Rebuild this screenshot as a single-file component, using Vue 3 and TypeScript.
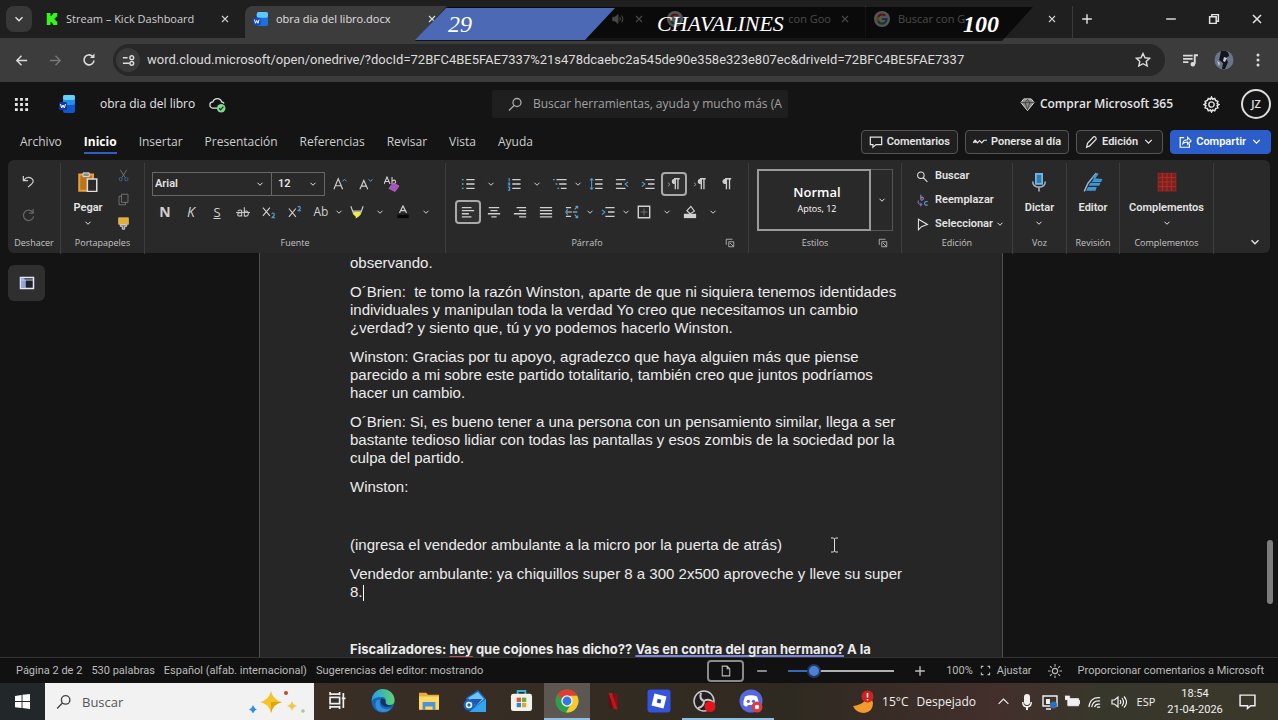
<script setup lang="ts">
import { h, ref } from 'vue'

type Shape = [d: string, stroke: string, fill?: string, width?: number]

const C = 'currentColor'
const B = '#4f9fd8'

const shapes: Record<string, Shape[]> = {
  chev: [['M4 6l4 4 4-4', C, '', 1.6]],
  up: [['M2 11l6-6 6 6', C, '', 1.4]],
  close: [['M4 4l8 8M12 4l-8 8', C, '', 1.5]],
  plus: [['M8 2.5v11M2.5 8h11', C, '', 1.6]],
  minus: [['M2.500 8h11', C, '', 1.6]],
  restore: [['M3 5.500h7.500v7.500h-7.500zM5.500 5.500v-2.500h7.500v7.500h-2.500', C, '', 1.7]],
  back: [['M14 8H3M8 3L3 8l5 5', C, '', 1.5]],
  forward: [['M2 8h11M8 3l5 5-5 5', C, '', 1.5]],
  reload: [['M13 8.500a5 5 0 1 1-1.500-4.200', C, '', 1.6], ['M13.500 1.500v4.500h-4.500z', '', C]],
  tune: [['M2 5h5M9 11h-7', C, '', 1.6], ['M9.500 5a2 2 0 1 0 4 0 2 2 0 1 0-4 0M9.500 11a2 2 0 1 0 4 0 2 2 0 1 0-4 0', C, '', 1.5]],
  star: [['M8 1.500l2 4.300 4.600.5-3.400 3.100 1 4.600L8 11.700 3.800 14l1-4.600L1.400 6.300 6 5.800z', C, '', 1.4]],
  queue: [['M1 3.500h9M1 6.500h9M1 9.500h5', C, '', 1.6], ['M12 11V3h3', C, '', 1.8], ['M8 11.500a2.200 2.200 0 1 0 4.400 0 2.200 2.200 0 1 0-4.400 0', '', C]],
  dots: [['M6.500 3a1.500 1.500 0 1 0 3 0 1.500 1.500 0 1 0-3 0M6.500 8a1.500 1.500 0 1 0 3 0 1.500 1.500 0 1 0-3 0M6.500 13a1.500 1.500 0 1 0 3 0 1.500 1.500 0 1 0-3 0', '', C]],
  volume: [['M2 6h2.500L8 3v10L4.500 10H2z', C, C, 1], ['M10 6q1.500 2 0 4M12 4q3 4 0 8', C, '', 1.2]],
  kick: [['M1 0h5v4h1.500v-2h2V0H15v5h-2v2h-1.500v2H13v2h2v5H9.500v-2h-2v-2H6v4H1z', '', '#37f51c']],
  grid: [['M1 1h3v3H1zM6.500 1h3v3h-3zM12 1h3v3h-3zM1 6.500h3v3H1zM6.500 6.500h3v3h-3zM12 6.500h3v3h-3zM1 12h3v3H1zM6.500 12h3v3h-3zM12 12h3v3h-3z', '', C]],
  cloud: [['M8 11.500H4a3 3 0 0 1-.3-6 4.300 4.300 0 0 1 8.200 0 3 3 0 0 1 2.300 1.500', C, '', 1.2], ['M7.500 11.500a4 4 0 1 0 8 0 4 4 0 1 0-8 0', '', '#7fd691'], ['M9.500 11.500l1.500 1.500 2.500-3', '#173b20', '', 1.2]],
  search: [['M6 6.500a4 4 0 1 0 8 0 4 4 0 1 0-8 0M7 9.500L2 14.500', C, '', 1.3]],
  find: [['M2 6.500a4 4 0 1 0 8 0 4 4 0 1 0-8 0M9 9.500l5 5', C, '', 1.3]],
  gem: [['M4 2h8l3 4-7 8.500L1 6z', C, '#8b8b8b', 1], ['M1 6h14M5.500 6L8 13.500 10.500 6 8 2.500z', '#333', '', .8]],
  gear: [['M8 1l1 2 2-.8.9 2.100 2.100.8-.7 2L15 8l-1.700 1.100.7 2-2.100.8-.9 2.100-2-.8-1 1.800-1-1.800-2 .8-.9-2.100-2.100-.8.7-2L1 8l1.700-1-.7-2 2.100-.8L5 2.200 7 3z', C, '', 1.4], ['M5.500 8a2.500 2.500 0 1 0 5 0 2.500 2.500 0 1 0-5 0', C, '', 1.3]],
  comment: [['M1.500 2.500h13v8.500H8l-3.500 3V11h-3z', C, '', 1.4]],
  wave: [['M0 9l2.500-3L5 9l2.500-2.500L10 9l2.500-3H16', C, '', 1.4], ['M1 7.500a1.500 1.500 0 1 0 3 0 1.500 1.500 0 1 0-3 0', '', C]],
  pencil: [['M3 14l1-4.500L11 2q1-.7 2.200.4T13.700 5L6.500 12.500z', C, '', 1.4]],
  share: [['M7 3H2.500v11h10.500v-4', C, '', 1.4], ['M5.500 10q.5-4.500 5.500-4.500V2.500l4 4.200-4 3.800V8Q7 8 5.500 10z', C, '', 1.2]],
  undo: [['M2.500 2v5h5M3 6.500Q7 2 11 4.500t0 6.500L7.500 14', C, '', 1.3]],
  redo: [['M13 2v4.500H8.500M12.800 6a5.500 5.500 0 1 0 .7 4', C, '', 1.3]],
  paste: [['M1 2h11v13H1z', '#e9a13b', '#b9741d', 1.6], ['M4 .7h5v3H4z', '#ddd', '#888', .8], ['M7.500 5.500H15v10H7.500z', '#ddd', '#2a2a2a', 1.200]],
  cut: [['M4 1l6 9.500M12 1L6 10.500', '#777', '', 1.1], ['M2.500 12.500a2 2 0 1 0 4 0 2 2 0 1 0-4 0M9.500 12.500a2 2 0 1 0 4 0 2 2 0 1 0-4 0', '#35658a', '', 1.2]],
  copy: [['M5.500 1.500h8v10h-8zM5.500 4H2.500v10.500h8v-3', '#777', '', 1.1]],
  painter: [['M2 1h12v8H2z', '#e5bd57', '#e0ae3d', 1], ['M4 9.500h8v2H9.500V15h-3v-3.500H4z', '#eee', '#777', 1]],
  grow: [['M1 14L6 2l5 12M3 10h6', C, '', 1.3], ['M11 5l2.200-2.500L15.500 5', B, '', 1.1]],
  shrink: [['M1 14L5.500 4 10 14M3 10.500h5', C, '', 1.3], ['M11 2.500L13.200 5l2.300-2.500', B, '', 1.1]],
  clear: [['M0 8l3-7 3 7M1 5.500h4M8 1v7M8 5q3-2 3.500.5T8 7.500', C, '', 1.1], ['M9 7l6 3-4 5.500-6-3z', '#b15cc6', '#a653ba', 1]],
  sub: [['M1 3l8 9.500M9 3L1 12.500', C, '', 1.3], ['M11 10q2.500-2 3 .3T11 14.500h4', B, '', 1.2]],
  sup: [['M1 4l8 9.500M9 4L1 13.500', C, '', 1.3], ['M11 2.500q2.500-2 3 .3T11 6.500h4', B, '', 1.2]],
  strike: [['M0 8.500h16', C, '', 1.1], ['M6.500 6v7M2 7q4-2.500 4.500 0M6.500 9Q2 8.500 2 11t4.500 1M9.500 2.500V13M9.500 7.500q4-2 4.500 2t-4.500 3', C, '', 1.2]],
  marker: [['M1 1.500l2 5.500h10l2-5.500M3 7l1 3h8l1-3', C, '', 1.300], ['M4 8h8v3l-2 2-3.500 2.500V13L4 11z', '', '#e9ee48']],
  fontcol: [['M4 9L8 1l4 8M5.500 6.500h5', C, '', 1.3], ['M1.500 11h13v4h-13z', '', '#080808']],
  bullets: [['M6 3h9.500M6 8h9.500M6 13h9.500', C, '', 1.5], ['M1 3h2M1 8h2M1 13h2', B, '', 1.6]],
  numbers: [['M6 3h9.500M6 8h9.500M6 13h9.500', C, '', 1.5], ['M2.500 1v4M1 7h2v2H1M1 11.500h2V15H1', B, '', 1.3]],
  multi: [['M4 3h11.500M7 8h8.500M9 13h6.500', C, '', 1.5], ['M0 3h2M3 8h2M5 13h2', B, '', 1.5]],
  spacing: [['M7 3h8.500M7 8h8.500M7 13h8.500', C, '', 1.5], ['M3 2v12M1 4l2-2 2 2M1 12l2 2 2-2', B, '', 1.2]],
  outdent: [['M1 3h11M1 8h7M1 13h11', C, '', 1.5], ['M15 5.500L11.500 8l3.500 3', B, '', 1.2]],
  indent: [['M5 3h10.500M8 8h7.500M5 13h10.500', C, '', 1.5], ['M1 5.500L4.500 8 1 11', B, '', 1.2]],
  ltr: [['M9.500 2v12M12.500 2v12M8 2h6.500', C, '', 1.500], ['M9 2Q5.500 2 5.500 5t3.500 3z', '', C], ['M1 6.500l2.500 2L1 10.500', '#999', '', 1]],
  pilcrow: [['M8.500 2v12M12 2v12M7 2h7', C, '', 1.500], ['M8 2Q4 2 4 5t4 3z', '', C]],
  left: [['M1 3h11M1 6.500h14M1 10h8M1 13.500h11', C, '', 1.5]],
  center: [['M2 3h12M4 6.500h8M1 10h14M5 13.500h6', C, '', 1.5]],
  right: [['M4 3h11M7 6.500h8M1 10h14M7 13.500h8', C, '', 1.5]],
  justify: [['M1 3h14M1 6.500h14M1 10h14M1 13.500h14', C, '', 1.5]],
  linesp: [['M8 8H2M1 3h6M1 13h6M9 8h5', C, '', 1.3], ['M11 5l3-3M11 11l3 3M3 5l-2 3 2 3M12 1.500h2.500v2.500M12 14.500h2.500V12', B, '', 1.4]],
  border: [['M1.500 1.500h13v13h-13z', C, '', 1.6], ['M8 4v8M4 8h8', '#777', '', 1]],
  fill: [['M4.500 6.500L9 1.500 13 7l-5 3z', C, '', 1.3], ['M1 10h14v5H1z', '', C]],
  launch: [['M2 11V2h10', C, '', 1.3], ['M6 6h8v8H6z', C, '', 1.3], ['M8 8l5 5', C, '', 1.300]],
  replace: [['M6 1v6M6 5q3-2 3 .5T6 7.500', '#a48ad6', '', 1.3], ['M3 8q-2 5 4 5M5 10.500l2.500 2.500L5 15', '#8b7fd0', '', 1.2], ['M14.500 9.500q-4-1-4 2t4 2', B, '', 1.400]],
  cursor: [['M3 1.500v13l3.800-3.800 7.200-2.700z', C, '', 1.3]],
  mic: [['M5.500 1.500h5v8h-5z', '#71b7e6', '#2c7db8', 1.4], ['M3 7.500q0 4.500 5 4.500t5-4.500M8 12v3.500', '#aab', '', 1.3]],
  editor: [['M1 15.500L4 9l6.500-8', '#9fb2c4', '', 1.2], ['M7 5l4-4.500 1.500 1L10 5zM9 5l6.500.5-1 2.500H7zM6 8.500h8l-1 2.500H4.500zM4 12h7l-1 3H2.500z', '', '#3f95d6']],
  addins: [['M1 1h14v14H1z', '#8a2723', '#7d1f1c', 1], ['M8 1v14M1 8h14M4.500 1v14M11.500 1v14M1 4.500h14M1 11.500h14', '#a93029', '', .8]],
  pane: [['M1.500 2.500h13v11h-13z', '#e6e9f5', '#20232c', 1.5], ['M2 3h3.500v10H2z', '', '#8fa6ea'], ['M2 5h12M6 5v8', '#c5cdec', '', 1.2]],
  page: [['M3 1.500h6.500L13 5v9.500H3zM9.500 1.500V5H13', C, '', 1.4]],
  fit: [['M5 2H2v3M11 2h3v3M5 14H2v-3M11 14h3v-3', C, '', 1.6]],
  sun: [['M8 0v3M8 13v3M0 8h3M13 8h3M2.300 2.300l2 2M11.700 11.700l2 2M13.700 2.300l-2 2M4.300 11.700l-2 2', C, '', 1.2], ['M5 8a3 3 0 1 0 6 0 3 3 0 1 0-6 0', C, '', 1.3]],
  windows: [['M0 2l7-1v6.500H0zM8 .9L16 0v7.500H8zM0 8.500h7V15l-7-1zM8 8.500h8V16l-8-1z', '', C]],
  task: [['M1 2h9M1 14h9M1 5h9v6H1zM1 0v3M10 0v3M1 13v3M10 13v3', C, '', 1.6], ['M13.500 1v14M12 6h3.500', C, '', 1.6]],
  traymic: [['M8 0q3 0 3 3v5q0 3-3 3T5 8V3q0-3 3-3zM3 8h1.500q0 4 3.500 4t3.500-4H13q0 5-4 5.500V16H7v-2.500Q3 13 3 8z', '', C]],
  screen: [['M1 2h14v10H1zM4 15h5', C, '', 1.400], ['M4 5h4v5H4z', '', C], ['M8 11a3.500 3.500 0 1 0 7 0 3.500 3.500 0 1 0-7 0', '', '#2f6fb8']],
  battery: [['M3 5h11.500v7.500H3z', C, C, 1], ['M0 2h5v4H0zM15 7h1v3.500h-1z', C, C, .6]],
  wifi: [['M13 14H9.500M13 11Q8 10 7 14M13 7.500Q5 6.500 4 14M13 4Q2 3 1 14', C, '', 1.2]],
  sound: [['M1 6h2.500L7 3v10L3.500 10H1z', C, '', 1.2], ['M9 6q1.500 2 0 4M11 4q3 4 0 8M13 2.500q5 5.500 0 11', C, '', 1.2]],
  note: [['M1 2h14v10h-4l-3 2.500V12H1z', C, '', 1.4]],
}

const Ico = (p: { n: string; s?: number }) =>
  h('svg', { class: 'ico', viewBox: '0 0 16 16', width: p.s ?? 14, height: p.s ?? 14, 'aria-hidden': 'true' },
    shapes[p.n].map(([d, stroke, fill, w]) =>
      h('path', { d, stroke: stroke || 'none', fill: fill || 'none', 'stroke-width': w ?? 1 })))
Ico.props = ['n', 's']

const menus = ['Archivo', 'Inicio', 'Insertar', 'Presentación', 'Referencias', 'Revisar', 'Vista', 'Ayuda']
const activeMenu = ref('Inicio')
const searchTabs = ['con Goo', 'Buscar con G']

interface Tool { n: string; label: string; kind?: 'chev' | 'tight' | 'on'; text?: string; cls?: string }
const more = (kind: 'chev' | 'tight' = 'chev'): Tool => ({ n: 'chev', label: 'Más opciones', kind })

const fontTools: Tool[] = [
  { n: '', label: 'Negrita', text: 'N', cls: 'bold' },
  { n: '', label: 'Cursiva', text: 'K', cls: 'italic' },
  { n: '', label: 'Subrayado', text: 'S', cls: 'under' },
  { n: 'strike', label: 'Tachado' },
  { n: 'sub', label: 'Subíndice' },
  { n: 'sup', label: 'Superíndice' },
  { n: '', label: 'Mayúsculas', text: 'Ab' },
  more('tight'),
  { n: 'marker', label: 'Resaltado' }, more(),
  { n: 'fontcol', label: 'Color de fuente' }, more(),
]
const paraTop: Tool[] = [
  { n: 'bullets', label: 'Viñetas' }, more(),
  { n: 'numbers', label: 'Numeración' }, more(),
  { n: 'multi', label: 'Lista multinivel' }, more('tight'),
  { n: 'spacing', label: 'Espaciado' },
  { n: 'outdent', label: 'Disminuir sangría' },
  { n: 'indent', label: 'Aumentar sangría' },
  { n: 'ltr', label: 'De izquierda a derecha', kind: 'on' },
  { n: 'ltr', label: 'De derecha a izquierda' },
  { n: 'pilcrow', label: 'Marcas de párrafo' },
]
const paraBottom: Tool[] = [
  { n: 'left', label: 'Alinear a la izquierda', kind: 'on' },
  { n: 'center', label: 'Centrar' },
  { n: 'right', label: 'Alinear a la derecha' },
  { n: 'justify', label: 'Justificar' },
  { n: 'linesp', label: 'Interlineado' }, more('tight'),
  { n: 'indent', label: 'Sangría especial' }, more('tight'),
  { n: 'border', label: 'Bordes' }, more(),
  { n: 'fill', label: 'Sombreado' }, more(),
]

const paragraphs: string[][] = [
  ['observando.'],
  ['O´Brien:  te tomo la razón Winston, aparte de que ni siquiera tenemos identidades', 'individuales y manipulan toda la verdad Yo creo que necesitamos un cambio', '¿verdad? y siento que, tú y yo podemos hacerlo Winston.'],
  ['Winston: Gracias por tu apoyo, agradezco que haya alguien más que piense', 'parecido a mi sobre este partido totalitario, también creo que juntos podríamos', 'hacer un cambio.'],
  ['O´Brien: Si, es bueno tener a una persona con un pensamiento similar, llega a ser', 'bastante tedioso lidiar con todas las pantallas y esos zombis de la sociedad por la', 'culpa del partido.'],
  ['Winston:'],
  [''],
  ['(ingresa el vendedor ambulante a la micro por la puerta de atrás)'],
]
const zoomLevel = ref(20)
const search = ref('')
const winSearch = ref('')
</script>

<template>
  <div class="screen">
    <header class="tabstrip">
      <button class="tab-list" aria-label="Buscar pestañas"><Ico n="chev" :s="14" /></button>
      <div class="tab">
        <Ico n="kick" :s="12" /><span class="tab-name">Stream – Kick Dashboard</span>
        <button class="plain" aria-label="Cerrar"><Ico n="close" :s="12" /></button>
      </div>
      <div class="tab active">
        <svg class="ico" viewBox="0 0 16 16" width="15" height="15"><rect x="4" width="12" height="15" rx="2" fill="#1c6fdd" /><rect x="4" width="12" height="6" rx="2" fill="#5cc8fa" /><rect y="6" width="8" height="8" rx="1.500" fill="#1746b5" /><path d="M1.500 8l1.200 4L4 9l1.300 3 1.200-4" stroke="#fff" fill="none" /></svg>
        <span class="tab-name">obra dia del libro.docx</span>
        <button class="plain" aria-label="Cerrar"><Ico n="close" :s="12" /></button>
      </div>
      <div class="tab">
        <span class="tab-name"></span>
        <Ico n="volume" :s="14" />
        <button class="plain" aria-label="Cerrar"><Ico n="close" :s="12" /></button>
      </div>
      <div v-for="(name, i) in searchTabs" :key="name" class="tab google">
        <svg class="ico" viewBox="0 0 16 16" width="16" height="16"><circle cx="8" cy="8" r="8" fill="#f2f2f2" /><g fill="none" stroke-width="2.200"><path d="M11.200 4.800A4.500 4.500 0 0 0 4 6" stroke="#ea4335" /><path d="M4 6a4.500 4.500 0 0 0 0 4" stroke="#fbbc05" /><path d="M4 10a4.500 4.500 0 0 0 7 1.500" stroke="#34a853" /><path d="M11 11.500A4.500 4.500 0 0 0 12.500 8H8" stroke="#4285f4" /></g></svg>
        <span class="tab-name" :class="{ late: i === 0 }">{{ name }}</span>
        <button class="plain" aria-label="Cerrar"><Ico n="close" :s="12" /></button>
      </div>
      <button class="plain new-tab" aria-label="Nueva pestaña"><Ico n="plus" :s="14" /></button>
      <div class="window-controls">
        <button class="plain" aria-label="Minimizar"><Ico n="minus" :s="14" /></button>
        <button class="plain" aria-label="Restaurar"><Ico n="restore" :s="14" /></button>
        <button class="plain" aria-label="Cerrar ventana"><Ico n="close" :s="16" /></button>
      </div>
      <div class="banner">
        <div class="banner-dark"></div><div class="banner-blue"></div>
        <span class="score one">29</span><span class="score name">CHAVALINES</span><span class="score two">100</span>
      </div>
    </header>

    <nav class="toolbar" aria-label="Navegación">
      <button class="plain nav" aria-label="Atrás"><Ico n="back" :s="15" /></button>
      <button class="plain nav dim" aria-label="Adelante"><Ico n="forward" :s="15" /></button>
      <button class="plain nav" aria-label="Recargar"><Ico n="reload" :s="16" /></button>
      <div class="omnibox">
        <button class="site" aria-label="Información del sitio"><Ico n="tune" :s="15" /></button>
        <input class="url" aria-label="Dirección" value="word.cloud.microsoft/open/onedrive/?docId=72BFC4BE5FAE7337%21s478dcaebc2a545de90e358e323e807ec&amp;driveId=72BFC4BE5FAE7337" />
        <button class="plain" aria-label="Favorito"><Ico n="star" :s="16" /></button>
      </div>
      <button class="plain nav" aria-label="Multimedia"><Ico n="queue" :s="17" /></button>
      <button class="plain nav" aria-label="Perfil">
        <svg class="ico" viewBox="0 0 20 20" width="20" height="20"><circle cx="10" cy="10" r="9.500" fill="#69758a" /><path d="M7 1q8-1 8 5l-3 2 2 4-3 7H8l1-6-4-3 1-4z" fill="#14161b" /><path d="M10 7l3 1-2 4-2-1zM3 11l3 2-1 3z" fill="#c4cad4" /></svg>
      </button>
      <button class="plain kebab" aria-label="Menú"><Ico n="dots" :s="16" /></button>
    </nav>

    <section class="word-head">
      <button class="plain waffle" aria-label="Aplicaciones"><Ico n="grid" :s="15" /></button>
      <svg class="ico logo" viewBox="0 0 16 18" width="16" height="18"><rect x="4" width="12" height="18" rx="2" fill="#0f56cf" /><rect x="4" width="12" height="10" rx="2" fill="#2490ee" /><rect x="4" width="12" height="5" rx="2" fill="#65d0fb" /><rect y="7" width="8" height="8" rx="1.500" fill="#12379c" /><path d="M1.500 9l1.200 4L4 10l1.300 3 1.200-4" stroke="#fff" fill="none" /></svg>
      <span class="doc-name">obra dia del libro</span>
      <Ico n="cloud" :s="17" />
      <label class="word-search"><Ico n="search" :s="16" /><input v-model="search" aria-label="Buscar" placeholder="Buscar herramientas, ayuda y mucho más (Alt + Q)" /></label>
      <button class="plain buy"><Ico n="gem" :s="15" />Comprar Microsoft 365</button>
      <button class="plain gear" aria-label="Configuración"><Ico n="gear" :s="17" /></button>
      <button class="avatar">JZ</button>
    </section>

    <section class="menu-row">
      <button v-for="m in menus" :key="m" class="menu" :class="{ sel: m === activeMenu }" @click="activeMenu = m">{{ m }}</button>
      <div class="actions">
        <button class="action"><Ico n="comment" :s="14" />Comentarios</button>
        <button class="action"><Ico n="wave" :s="14" />Ponerse al día</button>
        <button class="action"><Ico n="pencil" :s="14" />Edición<Ico n="chev" :s="13" /></button>
        <button class="action primary"><Ico n="share" :s="14" />Compartir<Ico n="chev" :s="13" /></button>
      </div>
    </section>

    <section class="ribbon">
      <div class="group">
        <div class="body undo-col">
          <button class="tool" aria-label="Deshacer"><Ico n="undo" :s="15" /></button>
          <button class="tool dim" aria-label="Rehacer"><Ico n="redo" :s="15" /></button>
        </div>
        <div class="caption"><span>Deshacer</span></div>
      </div>
      <div class="group">
        <div class="body clip">
          <button class="big"><Ico n="paste" :s="20" /><span>Pegar</span><Ico n="chev" :s="10" /></button>
          <div class="stack">
            <button class="tool" aria-label="Cortar"><Ico n="cut" :s="13" /></button>
            <button class="tool" aria-label="Copiar"><Ico n="copy" :s="13" /></button>
            <button class="tool" aria-label="Copiar formato"><Ico n="painter" :s="13" /></button>
          </div>
        </div>
        <div class="caption"><span>Portapapeles</span></div>
      </div>
      <div class="group">
        <div class="body rows">
          <div class="row">
            <span class="combo"><select aria-label="Fuente"><option>Arial</option></select><Ico n="chev" :s="10" /></span>
            <span class="combo size"><select aria-label="Tamaño"><option>12</option></select><Ico n="chev" :s="10" /></span>
            <button class="tool" aria-label="Aumentar"><Ico n="grow" /></button>
            <button class="tool" aria-label="Reducir"><Ico n="shrink" /></button>
            <button class="tool" aria-label="Borrar formato"><Ico n="clear" :s="16" /></button>
          </div>
          <div class="row">
            <button v-for="(t, i) in fontTools" :key="i" class="tool" :class="[t.kind, t.cls]" :aria-label="t.label">
              <template v-if="t.text">{{ t.text }}</template><Ico v-else :n="t.n" :s="t.n === 'chev' ? 10 : 14" />
            </button>
          </div>
        </div>
        <div class="caption"><span>Fuente</span></div>
      </div>
      <div class="group">
        <div class="body rows para">
          <div v-for="(r, k) in [paraTop, paraBottom]" :key="k" class="row">
            <button v-for="(t, i) in r" :key="i" class="tool" :class="t.kind" :aria-label="t.label"><Ico :n="t.n" :s="t.n === 'chev' ? 10 : 14" /></button>
          </div>
        </div>
        <div class="caption has-launch"><span>Párrafo</span><button class="plain launch" aria-label="Opciones de párrafo"><Ico n="launch" :s="10" /></button></div>
      </div>
      <div class="group">
        <div class="body styles">
          <button class="style-card"><strong>Normal</strong><small>Aptos, 12</small></button>
          <button class="style-more" aria-label="Más estilos"><Ico n="chev" :s="10" /></button>
        </div>
        <div class="caption has-launch"><span>Estilos</span><button class="plain launch" aria-label="Opciones de estilos"><Ico n="launch" :s="10" /></button></div>
      </div>
      <div class="group">
        <div class="body edit">
          <button class="line"><Ico n="find" :s="13" />Buscar</button>
          <button class="line"><Ico n="replace" :s="13" />Reemplazar</button>
          <button class="line"><Ico n="cursor" :s="13" /><span>Seleccionar</span><Ico n="chev" :s="10" /></button>
        </div>
        <div class="caption"><span>Edición</span></div>
      </div>
      <div class="group">
        <div class="body one"><button class="big"><Ico n="mic" :s="20" /><span>Dictar</span><Ico n="chev" :s="10" /></button></div>
        <div class="caption"><span>Voz</span></div>
      </div>
      <div class="group">
        <div class="body one"><button class="big"><Ico n="editor" :s="20" /><span>Editor</span></button></div>
        <div class="caption"><span>Revisión</span></div>
      </div>
      <div class="group">
        <div class="body one"><button class="big"><Ico n="addins" :s="20" /><span>Complementos</span><Ico n="chev" :s="10" /></button></div>
        <div class="caption"><span>Complementos</span></div>
      </div>
      <div class="group last"><button class="plain" aria-label="Contraer la cinta"><Ico n="chev" :s="14" /></button></div>
    </section>

    <main class="canvas">
      <aside class="rail"><button class="pane" aria-label="Panel de navegación"><Ico n="pane" :s="16" /></button></aside>
      <article class="paper">
        <p v-for="(p, i) in paragraphs" :key="i"><span v-for="l in p" :key="l" class="ln">{{ l }}</span></p>
        <p><span class="ln">Vendedor ambulante: ya chiquillos super 8 a 300 2x500 aproveche y lleve su super</span><span class="ln">8.<i class="caret"></i></span></p>
        <p></p>
        <p class="fisc">Fiscalizadores: <span class="typo">hey</span> que cojones has dicho?? <span class="gram">Vas en contra del gran hermano?</span> A la</p>
        <svg class="ibeam" viewBox="0 0 9 16" width="9" height="16"><path d="M1 1h2.500l1 1 1-1H8M4.500 2v12M1 15h2.500l1-1 1 1H8" stroke="#ddd" fill="none" /></svg>
      </article>
      <div class="track"><div class="thumb"></div></div>
    </main>

    <footer class="status">
      <span>Página 2 de 2</span><span>530 palabras</span><span>Español (alfab. internacional)</span><span>Sugerencias del editor: mostrando</span>
      <div class="status-right">
        <button class="view" aria-label="Diseño de impresión"><Ico n="page" :s="12" /></button>
        <button class="plain step" aria-label="Alejar"><Ico n="minus" :s="14" /></button>
        <input v-model="zoomLevel" class="zoom" type="range" min="0" max="100" aria-label="Zoom" />
        <button class="plain step" aria-label="Acercar"><Ico n="plus" :s="14" /></button>
        <span class="pct">100%</span>
        <button class="plain fit"><Ico n="fit" :s="11" />Ajustar</button>
        <button class="plain sun" aria-label="Tema"><Ico n="sun" :s="14" /></button>
        <a href="#" class="feedback">Proporcionar comentarios a Microsoft</a>
      </div>
    </footer>

    <footer class="taskbar">
      <button class="start" aria-label="Inicio"><Ico n="windows" :s="15" /></button>
      <label class="win-search">
        <Ico n="search" :s="17" /><input v-model="winSearch" aria-label="Buscar" placeholder="Buscar" />
        <svg class="ico" viewBox="0 0 60 26" width="60" height="26"><path d="M23 2q2 9 11 11-9 2-11 11-2-9-11-11 9-2 11-11z" fill="#f5c526" /><path d="M23 13l11 0q-9 2-11 11z" fill="#e0a413" /><path d="M44 12q1 4 5 5-4 1-5 5-1-4-5-5 4-1 5-5z" fill="#efc94c" /><path d="M5 16q1 3.500 4 4.500-3 1-4 4-1-3-4-4 3-1 4-4.500z" fill="#2f8fe0" /><circle cx="38" cy="4" r="2" fill="#c9442e" /><circle cx="55" cy="22" r="1.800" fill="#a8c795" /></svg>
      </label>
      <button class="app" aria-label="Vista de tareas"><Ico n="task" :s="17" /></button>
      <button class="app" aria-label="Edge">
        <svg viewBox="0 0 24 24" width="24" height="24"><defs><linearGradient id="eg" x1="0" x2="1"><stop offset="0" stop-color="#2a9be8" /><stop offset="1" stop-color="#5bd66b" /></linearGradient></defs><circle cx="12" cy="12" r="11.500" fill="#1567b8" /><path d="M.7 12A11.400 11.400 0 0 1 23.500 11q.3 5-5 5-5 0-4-3 1-5-4-5Q3 8 .7 12z" fill="url(#eg)" /><path d="M9 11q-2 7 5 9 4 .7 7-1.500-4 5-9.500 4.500-7-1-7-7T9 11z" fill="#2f8fdd" /><path d="M10.500 9.500q-2 3 0 6 3 3.500 8.500 2l3-1.500q-7 1-7.500-3 1-3-4-3.500z" fill="#13355e" /></svg>
      </button>
      <button class="app" aria-label="Explorador">
        <svg viewBox="0 0 24 22" width="22" height="20"><path d="M1 2h8l2 2h12v17H1z" fill="#e7ad34" /><path d="M1 6h22v14H1z" fill="#fbd96a" /><path d="M5 12h14v9h-3v-4H8v4H5z" fill="#4f94cf" /></svg>
      </button>
      <button class="app" aria-label="Correo">
        <svg viewBox="0 0 24 24" width="24" height="24"><path d="M3 9L15 1l8 9v13H8z" fill="#1d69c4" /><path d="M5 9L15 3l6 7-8 7z" fill="#6cc6f3" /><path d="M6 23l17-13v13z" fill="#2fa6ee" /><path d="M7 10h12l-6 7z" fill="#2457a8" /><circle cx="6" cy="16" r="5.500" fill="#1a63bd" /><circle cx="6" cy="16" r="2.500" fill="none" stroke="#e8f4ff" stroke-width="1.600" /></svg>
      </button>
      <button class="app" aria-label="Tienda">
        <svg viewBox="0 0 24 24" width="23" height="23"><path d="M8 6V2h8v4" stroke="#36b7d6" stroke-width="2" fill="none" /><rect x="1" y="5" width="22" height="18" rx="2.500" fill="#f2f1ec" /><path d="M7 9h4.500v4.500H7z" fill="#d65a36" /><path d="M12.500 9H17v4.500h-4.500z" fill="#6ea83a" /><path d="M7 14.500h4.500V19H7z" fill="#3183c8" /><path d="M12.500 14.500H17V19h-4.500z" fill="#dda62c" /></svg>
      </button>
      <button class="app current open" aria-label="Chrome">
        <svg viewBox="0 0 24 24" width="24" height="24"><circle cx="12" cy="12" r="11.500" fill="#2f9e4b" /><path d="M12 12L2 6.200A11.500 11.500 0 0 1 22 6.200L22.500 7.500z" fill="#df3f31" /><path d="M12 .5A11.500 11.500 0 0 1 22 6.500H12z" fill="#df3f31" /><path d="M22.200 6.800A11.500 11.500 0 0 1 11 23.500L16.500 14 15 6.800z" fill="#f7c92f" /><circle cx="12" cy="12" r="5.700" fill="#f5f5f5" /><circle cx="12" cy="12" r="4.400" fill="#3577e0" /></svg>
      </button>
      <button class="app" aria-label="Netflix">
        <svg viewBox="0 0 12 20" width="12" height="18"><path d="M1 1h3.500v18L1 17z" fill="#5e1013" /><path d="M7.500 1L11 3v16.500l-3.500-.5z" fill="#8e0d14" /><path d="M1 1h4L11 19.500 7 19z" fill="#c4141f" /></svg>
      </button>
      <button class="app" aria-label="Roblox">
        <svg viewBox="0 0 24 24" width="24" height="24"><rect x=".5" y=".5" width="23" height="23" rx="3" fill="#3553dc" /><path d="M7.500 4.500l12 3-3 12-12-3z" fill="#fff" /><path d="M10.700 9.700l3.700 1-1 3.700-3.700-1z" fill="#2446c4" /></svg>
      </button>
      <button class="app open" aria-label="OBS">
        <svg viewBox="0 0 24 24" width="24" height="24"><circle cx="11" cy="12" r="10" fill="#211f22" stroke="#c9c9c9" stroke-width="1.500" /><path d="M11 12Q6 10 8 4M11 12q5-3 9 1M11 12q0 6-6 7" stroke="#c9c9c9" stroke-width="2" fill="none" /><circle cx="17" cy="17.500" r="5.500" fill="#e0161c" /></svg>
      </button>
      <button class="app open" aria-label="Discord">
        <svg viewBox="0 0 24 24" width="24" height="24"><circle cx="12" cy="12" r="11.500" fill="#5967df" /><path d="M6 7.500q6-2.500 12 0 2 4 1.500 8.500-2 1.500-3.500 1.500l-1-1.500H9l-1 1.500q-2 0-3.500-1.500Q4 11.500 6 7.500z" fill="#fff" /><circle cx="9.300" cy="12.300" r="1.600" fill="#5967df" /><circle cx="14.500" cy="12.300" r="1.600" fill="#5967df" /><circle cx="18" cy="18" r="5.500" fill="#dc3a46" /><circle cx="18" cy="18" r="2.200" fill="#fff" /></svg>
      </button>
      <div class="tray">
        <button class="plain weather">
          <svg viewBox="0 0 22 24" width="22" height="24"><path d="M14 5q1 9-13 11 3 7 11 7 9-1 9-10-1-6-7-8z" fill="#f39a2d" /><circle cx="15.500" cy="6.500" r="6" fill="#cf2320" /><path d="M15.500 3v4.500M15.500 9v1.500" stroke="#fff" stroke-width="1.500" /></svg>
          <span>15°C</span><span>Despejado</span>
        </button>
        <button class="plain tr" aria-label="Mostrar iconos ocultos"><Ico n="up" :s="13" /></button>
        <button class="plain tr" aria-label="Micrófono"><Ico n="traymic" :s="16" /></button>
        <button class="plain tr" aria-label="Pantalla"><Ico n="screen" :s="16" /></button>
        <button class="plain tr" aria-label="Batería"><Ico n="battery" :s="15" /></button>
        <button class="plain tr" aria-label="Red"><Ico n="wifi" :s="15" /></button>
        <button class="plain tr" aria-label="Volumen"><Ico n="sound" :s="16" /></button>
        <button class="plain lang">ESP</button>
        <button class="plain clock"><span>18:54</span><span>21-04-2026</span></button>
        <button class="plain notes" aria-label="Notificaciones"><Ico n="note" :s="17" /></button>
      </div>
    </footer>
  </div>
</template>

<style>
body { margin: 0; background: #141414; }
</style>

<style scoped>
* { box-sizing: border-box; }
.screen { height: 100vh; display: flex; flex-direction: column; overflow: hidden; background: #141414; color: #e4e4e4; font: 12px/16px "Open Sans", "Noto Sans", sans-serif; }
button, input, select { font: inherit; color: inherit; margin: 0; padding: 0; border: 0; background: none; outline: 0; }
button { display: flex; align-items: center; justify-content: center; white-space: nowrap; }
.ico { display: block; flex: none; }

.tabstrip { position: relative; flex: none; height: 38px; display: flex; align-items: center; padding-left: 6px; background: #1f1f1f; }
.tab-list { width: 26px; height: 26px; margin-right: 6px; border-radius: 8px; background: #383838; }
.tab { flex: 0 1 207px; min-width: 0; height: 32px; align-self: flex-end; display: flex; align-items: center; gap: 8px; padding: 0 14px 6px 8px; font-size: 11px; color: #cfcfcf; }
.tab.active { background: #3c3c3c; border-radius: 8px 8px 0 0; color: #e0e0e0; }
.tab-name { flex: 1; min-width: 0; overflow: hidden; white-space: nowrap; }
.tab-name.late { text-align: right; }
.google { border-right: 1px solid #3a3a3a; }
.new-tab { width: 28px; }
.window-controls { margin-left: auto; display: flex; }
.window-controls button { width: 43px; }
.banner { position: absolute; top: 7px; left: 415px; width: 618px; height: 34px; color: #fff; font: italic 24px/34px "Liberation Serif", serif; }
.banner-dark { position: absolute; inset: 0; background: rgba(0, 0, 0, .65); clip-path: polygon(31px 0, 100% 0, 587px 100%, 0 100%); }
.banner-blue { position: absolute; left: 0; top: 1px; width: 200px; height: 32px; background: #4b69b4; clip-path: polygon(31px 0, 100% 0, 170px 100%, 0 100%); }
.score { position: absolute; top: 0; }
.one.score { left: 33px; }
.name { left: 242px; font-size: 22px; }
.two { left: 548px; font-weight: bold; }

.toolbar { flex: none; height: 44px; display: flex; align-items: center; padding: 0 3px 0 4px; background: #3c3c3c; color: #dcdcdc; }
.nav { width: 34px; height: 32px; }
.dim { color: #777; }
.omnibox { flex: 1; display: flex; align-items: center; height: 32px; margin: 0 8px 0 7px; padding: 0 14px 0 3px; border-radius: 16px; background: #282828; }
.site { width: 24px; height: 24px; border-radius: 12px; background: #3a3a3a; }
.url { flex: 1; min-width: 0; margin-left: 7px; font-family: Roboto, sans-serif; font-size: 13px; }
.kebab { width: 34px; }

.word-head { flex: none; height: 44px; display: flex; align-items: center; padding: 0 7px 0 14px; background: #141414; }
.logo { margin: 0 25px 0 30px; }
.doc-name { width: 109px; font-size: 12px; white-space: nowrap; }
.word-search { display: flex; align-items: center; gap: 10px; width: 296px; height: 28px; margin-left: auto; padding: 0 6px 0 15px; background: #1f1f1f; border-radius: 3px; color: #aaa; }
.word-search input { flex: 1; min-width: 0; }
.word-search input::placeholder { color: #a2a2a2; }
.buy { gap: 5px; margin-left: 232px; font-weight: 600; }
.gear { margin-left: 30px; }
.avatar { width: 30px; height: 30px; margin-left: 21px; border: 2px solid #ddd; border-radius: 15px; font-size: 11px; font-weight: 600; }

.menu-row { flex: none; height: 34px; display: flex; align-items: center; padding: 0 7px 3px 20px; background: #141414; }
.menu { height: 24px; margin-right: 22px; border-bottom: 2px solid transparent; border-top: 2px solid transparent; color: #cfcfcf; }
.menu.sel { color: #fff; font-weight: 700; border-bottom-color: #2f5fc4; }
.actions { display: flex; gap: 7px; margin-left: auto; }
.action { height: 24px; padding: 0 7px; gap: 4px; border: 1px solid #555; border-radius: 4px; background: #1f1f1f; font: 600 11px/16px Roboto, sans-serif; }
.primary { background: #2c5ecb; border-color: #2c5ecb; color: #fff; }

.ribbon { flex: none; height: 93px; margin: 0 8px; display: grid; grid-template-columns: 53px 84px 301px 303px 153px 111px 54px 53px 94px 1fr; border-radius: 6px; background: #292929; }
.group { display: flex; flex-direction: column; min-width: 0; margin: 3px 0 2px; border-right: 1px solid #3d3d3d; }
.last { border: 0; flex-direction: row; align-items: flex-end; justify-content: flex-end; padding: 0 8px 5px 0; }
.body { flex: 1; min-height: 0; display: flex; }
.caption { flex: none; display: flex; align-items: center; height: 14px; margin-bottom: 4px; font-size: 9px; color: #c4c4c4; }
.caption span { flex: 1; text-align: center; }
.has-launch { padding-left: 8px; }
.launch { width: 20px; margin-right: 8px; }
.tool { width: 26px; height: 24px; border: 2px solid transparent; border-radius: 4px; color: #d0d0d0; }
.tool.dim { color: #666; }
.tool.chev { width: 20px; }
.tool.tight { width: 10px; border: 0; }
.tool.on { border-color: #aaa; background: #303030; }
.bold { font-size: 14px; font-weight: 700; }
.italic { font-size: 14px; font-style: italic; }
.under { font-size: 13px; text-decoration: underline; }
.undo-col { flex-direction: column; align-items: center; gap: 9px; padding: 6px 11px 0 0; }
.clip { padding-left: 6px; }
.big { flex-direction: column; justify-content: flex-start; gap: 2px; padding-top: 9px; font: 600 11px/16px Roboto, sans-serif; }
.big span { margin-top: 6px; }
.clip .big { width: 42px; }
.stack { display: flex; flex-direction: column; margin-left: 1px; }
.rows { flex-direction: column; gap: 4px; padding: 9px 0 0 7px; }
.para { padding-left: 9px; }
.row { display: flex; height: 24px; }
.combo { display: flex; align-items: center; width: 120px; height: 24px; padding: 0 6px 0 2px; border: 1px solid #666; font: 600 11px/16px Roboto, sans-serif; }
.combo select { flex: 1; min-width: 0; appearance: none; background: #292929; }
.size { width: 54px; margin-left: -1px; padding-left: 6px; margin-right: 2px; }
.styles { padding: 6px 8px 5px 8px; }
.style-card { flex: 1; flex-direction: column; border: 2px solid #9a9a9a; padding-left: 6px; color: #fff; }
.style-card strong { font-size: 13px; line-height: 18px; font-weight: 600; }
.style-card small { font-size: 9px; line-height: 16px; }
.style-more { width: 22px; border: 1px solid #555; border-left: 0; }
.edit { flex-direction: column; align-items: flex-start; padding: 1px 0 0 14px; }
.line { height: 24px; gap: 6px; font: 600 11px/16px Roboto, sans-serif; }
.line span { margin-right: -4px; }
.one.body { justify-content: center; }

.canvas { flex: 1; min-height: 0; display: grid; grid-template-columns: 1fr 744px 1fr 16px; overflow: hidden; border-bottom: 1px solid #333; }
.rail { padding: 12px 8px; }
.pane { width: 37px; height: 36px; border-radius: 6px; background: #2f2f2f; }
.paper { position: relative; min-height: 0; overflow: hidden; padding: 1px 0 0 90px; border: solid #505050; border-width: 0 1px; background: #262626; color: #ececec; font: 15px/18px "Liberation Sans", Arial, sans-serif; }
.paper p { margin: 0 0 11px; min-height: 18px; white-space: pre; }
.ln { display: block; min-height: 18px; }
.caret { display: inline-block; width: 1px; height: 16px; background: #fff; vertical-align: middle; }
.paper .fisc { font: 700 13px/16px "Inter", sans-serif; }
.typo { text-decoration: underline #b8505a 1px; text-underline-offset: 2px; text-decoration-skip-ink: none; }
.gram { text-decoration: underline #7b83d6 2px; text-underline-offset: 1px; text-decoration-skip-ink: none; }
.ibeam { position: absolute; left: 570px; top: 284px; }
.track { grid-column: 4; display: flex; flex-direction: column; align-items: center; justify-content: flex-end; padding-bottom: 53px; }
.thumb { width: 6px; height: 64px; border-radius: 3px; background: #7d7d7d; }

.status { flex: none; height: 25px; display: flex; align-items: center; gap: 9px; padding: 0 14px 0 16px; background: #111; color: #bcbcbc; font: 11px/16px Roboto, sans-serif; white-space: nowrap; }
.status-right { display: flex; align-items: center; margin-left: auto; }
.view { width: 37px; height: 22px; border: 2px solid #8a8a8a; border-radius: 4px; }
.step { width: 36px; }
.zoom { width: 106px; height: 16px; margin: 0 8px; appearance: none; }
.zoom::-webkit-slider-runnable-track { height: 2px; background: linear-gradient(90deg, #3a67b8 24%, #b0b0b0 24%); }
.zoom::-webkit-slider-thumb { appearance: none; width: 14px; height: 14px; margin-top: -6px; border: 2px solid #22365e; border-radius: 7px; background: #4c80d4; }
.pct { margin-left: 8px; }
.fit { gap: 6px; margin-left: 7px; }
.sun { width: 46px; }
.feedback { color: inherit; text-decoration: none; }

.taskbar { flex: none; height: 37px; display: flex; align-items: stretch; background: linear-gradient(90deg, #22272a 3%, #3a2e25 25%, #2f2a21 62%, #432f2c 78%, #38372b 86%, #3a382b); }
.start { width: 45px; color: #fff; }
.win-search { display: flex; align-items: center; width: 269px; padding: 0 6px 0 10px; background: #f2f2f2; color: #444; }
.win-search input { flex: 1; min-width: 0; margin-left: 10px; font-size: 13px; }
.win-search input::placeholder { color: #555; }
.app { width: 46px; border-bottom: 2px solid transparent; color: #eee; }
.current { background: #5d5752; }
.app.open { border-bottom-color: #8fc0e0; }
.tray { display: flex; align-items: center; margin-left: auto; padding-right: 18px; color: #f0f0f0; }
.weather { gap: 8px; margin-right: 16px; }
.tr { width: 23px; }
.lang { width: 32px; font-size: 11px; }
.clock { flex-direction: column; width: 66px; font: 11px/16px Roboto, sans-serif; }
.notes { width: 26px; margin-left: 6px; }
</style>
